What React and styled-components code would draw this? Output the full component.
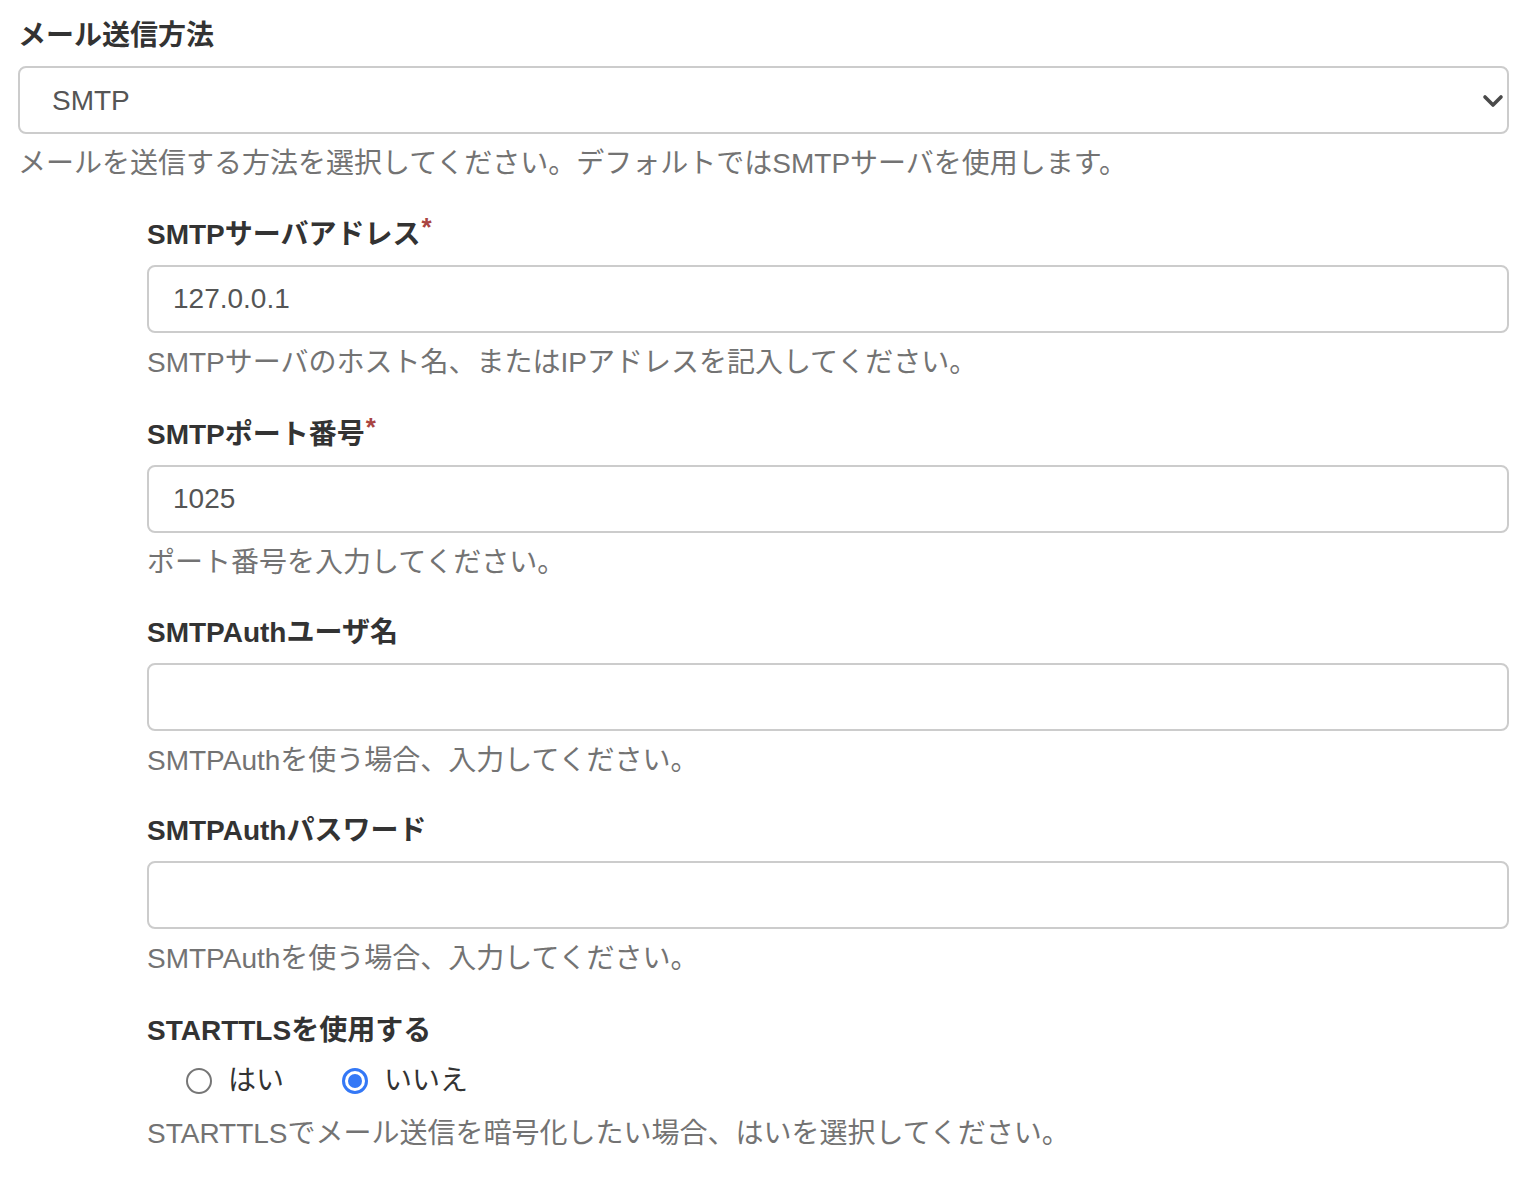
import React from "react";
import styled, { createGlobalStyle } from "styled-components";

const Global = createGlobalStyle`
  html, body { margin: 0; padding: 0; background: #fff; }
  body {
    font-family: "Liberation Sans", "Noto Sans CJK JP", sans-serif;
    font-size: 28px;
    line-height: 40px;
    color: #333;
  }
  * { box-sizing: border-box; }
`;

const Page = styled.div`
  padding: 16px 27px 40px 18px;
`;

const Group = styled.div`
  display: flex;
  flex-direction: column;
  margin-bottom: ${(p) => (p.$tight ? "29px" : "30px")};
`;

const Nested = styled.div`
  padding-left: 129px;
  display: flex;
  flex-direction: column;
`;

const Label = styled.label`
  display: block;
  font-weight: 700;
  line-height: 40px;
  min-height: ${(p) => (p.$required ? "42px" : "40px")};
  padding-top: ${(p) => (p.$required ? "2px" : "0")};
  margin-bottom: 10px;
  color: #333;
`;

const Req = styled.span`
  color: #a94442;
  font-size: 26px;
  vertical-align: 8px;
  line-height: 0;
  margin-left: 1px;
`;

const FieldBox = styled.div`
  position: relative;
  height: 68px;
  border: 2px solid #ccc;
  border-radius: 8px;
  background: #fff;
  display: flex;
  align-items: center;
`;

const Input = styled.input`
  width: 100%;
  height: 100%;
  border: none;
  outline: none;
  background: transparent;
  padding: 0 24px;
  font: inherit;
  font-weight: 400;
  color: #555;
`;

const SelectValue = styled.div`
  flex: 1;
  padding-left: 32px;
  padding-top: 1px;
  color: #555;
`;

const Chevron = styled.svg`
  width: 22px;
  height: 14px;
  margin-right: 3px;
  margin-top: 2px;
`;

const Help = styled.p`
  margin: 10px 0 0;
  line-height: 40px;
  color: #737373;
`;

const StartLabel = styled(Label)`
  padding-top: 2px;
  min-height: 42px;
`;

const RadioRow = styled.div`
  display: flex;
  align-items: center;
  height: 40px;
  margin-top: 0;
  padding-left: 39px;
  gap: 58px;
`;

const RadioLabel = styled.label`
  display: flex;
  align-items: center;
  gap: 16px;
  color: #333;
`;

const RadioMark = styled.span`
  width: 26px;
  height: 26px;
  border-radius: 50%;
  border: ${(p) => (p.$checked ? "3px solid #3478f6" : "2px solid #767676")};
  display: flex;
  align-items: center;
  justify-content: center;
  &::after {
    content: "";
    display: ${(p) => (p.$checked ? "block" : "none")};
    width: 14px;
    height: 14px;
    border-radius: 50%;
    background: #3478f6;
  }
`;

const RadioHelp = styled(Help)`
  margin-top: 13px;
`;

function TextField({ label, required, value, help }) {
  return (
    <Group>
      <Label $required={required}>
        {label}
        {required && <Req>*</Req>}
      </Label>
      <FieldBox>
        <Input defaultValue={value} />
      </FieldBox>
      <Help>{help}</Help>
    </Group>
  );
}

export default function App() {
  return (
    <Page>
      <Global />
      <Group $tight>
        <Label>メール送信方法</Label>
        <FieldBox>
          <SelectValue>SMTP</SelectValue>
          <Chevron viewBox="0 0 22 14">
            <path d="M3 3 L11 11 L19 3" fill="none" stroke="#4a4a4a" strokeWidth="3.6" strokeLinecap="round" strokeLinejoin="round" />
          </Chevron>
        </FieldBox>
        <Help>メールを送信する方法を選択してください。デフォルトではSMTPサーバを使用します。</Help>
      </Group>
      <Nested>
        <TextField label="SMTPサーバアドレス" required value="127.0.0.1" help="SMTPサーバのホスト名、またはIPアドレスを記入してください。" />
        <TextField label="SMTPポート番号" required value="1025" help="ポート番号を入力してください。" />
        <TextField label="SMTPAuthユーザ名" value="" help="SMTPAuthを使う場合、入力してください。" />
        <TextField label="SMTPAuthパスワード" value="" help="SMTPAuthを使う場合、入力してください。" />
        <Group>
          <StartLabel>STARTTLSを使用する</StartLabel>
          <RadioRow>
            <RadioLabel>
              <RadioMark />
              はい
            </RadioLabel>
            <RadioLabel>
              <RadioMark $checked />
              いいえ
            </RadioLabel>
          </RadioRow>
          <RadioHelp>STARTTLSでメール送信を暗号化したい場合、はいを選択してください。</RadioHelp>
        </Group>
      </Nested>
    </Page>
  );
}
